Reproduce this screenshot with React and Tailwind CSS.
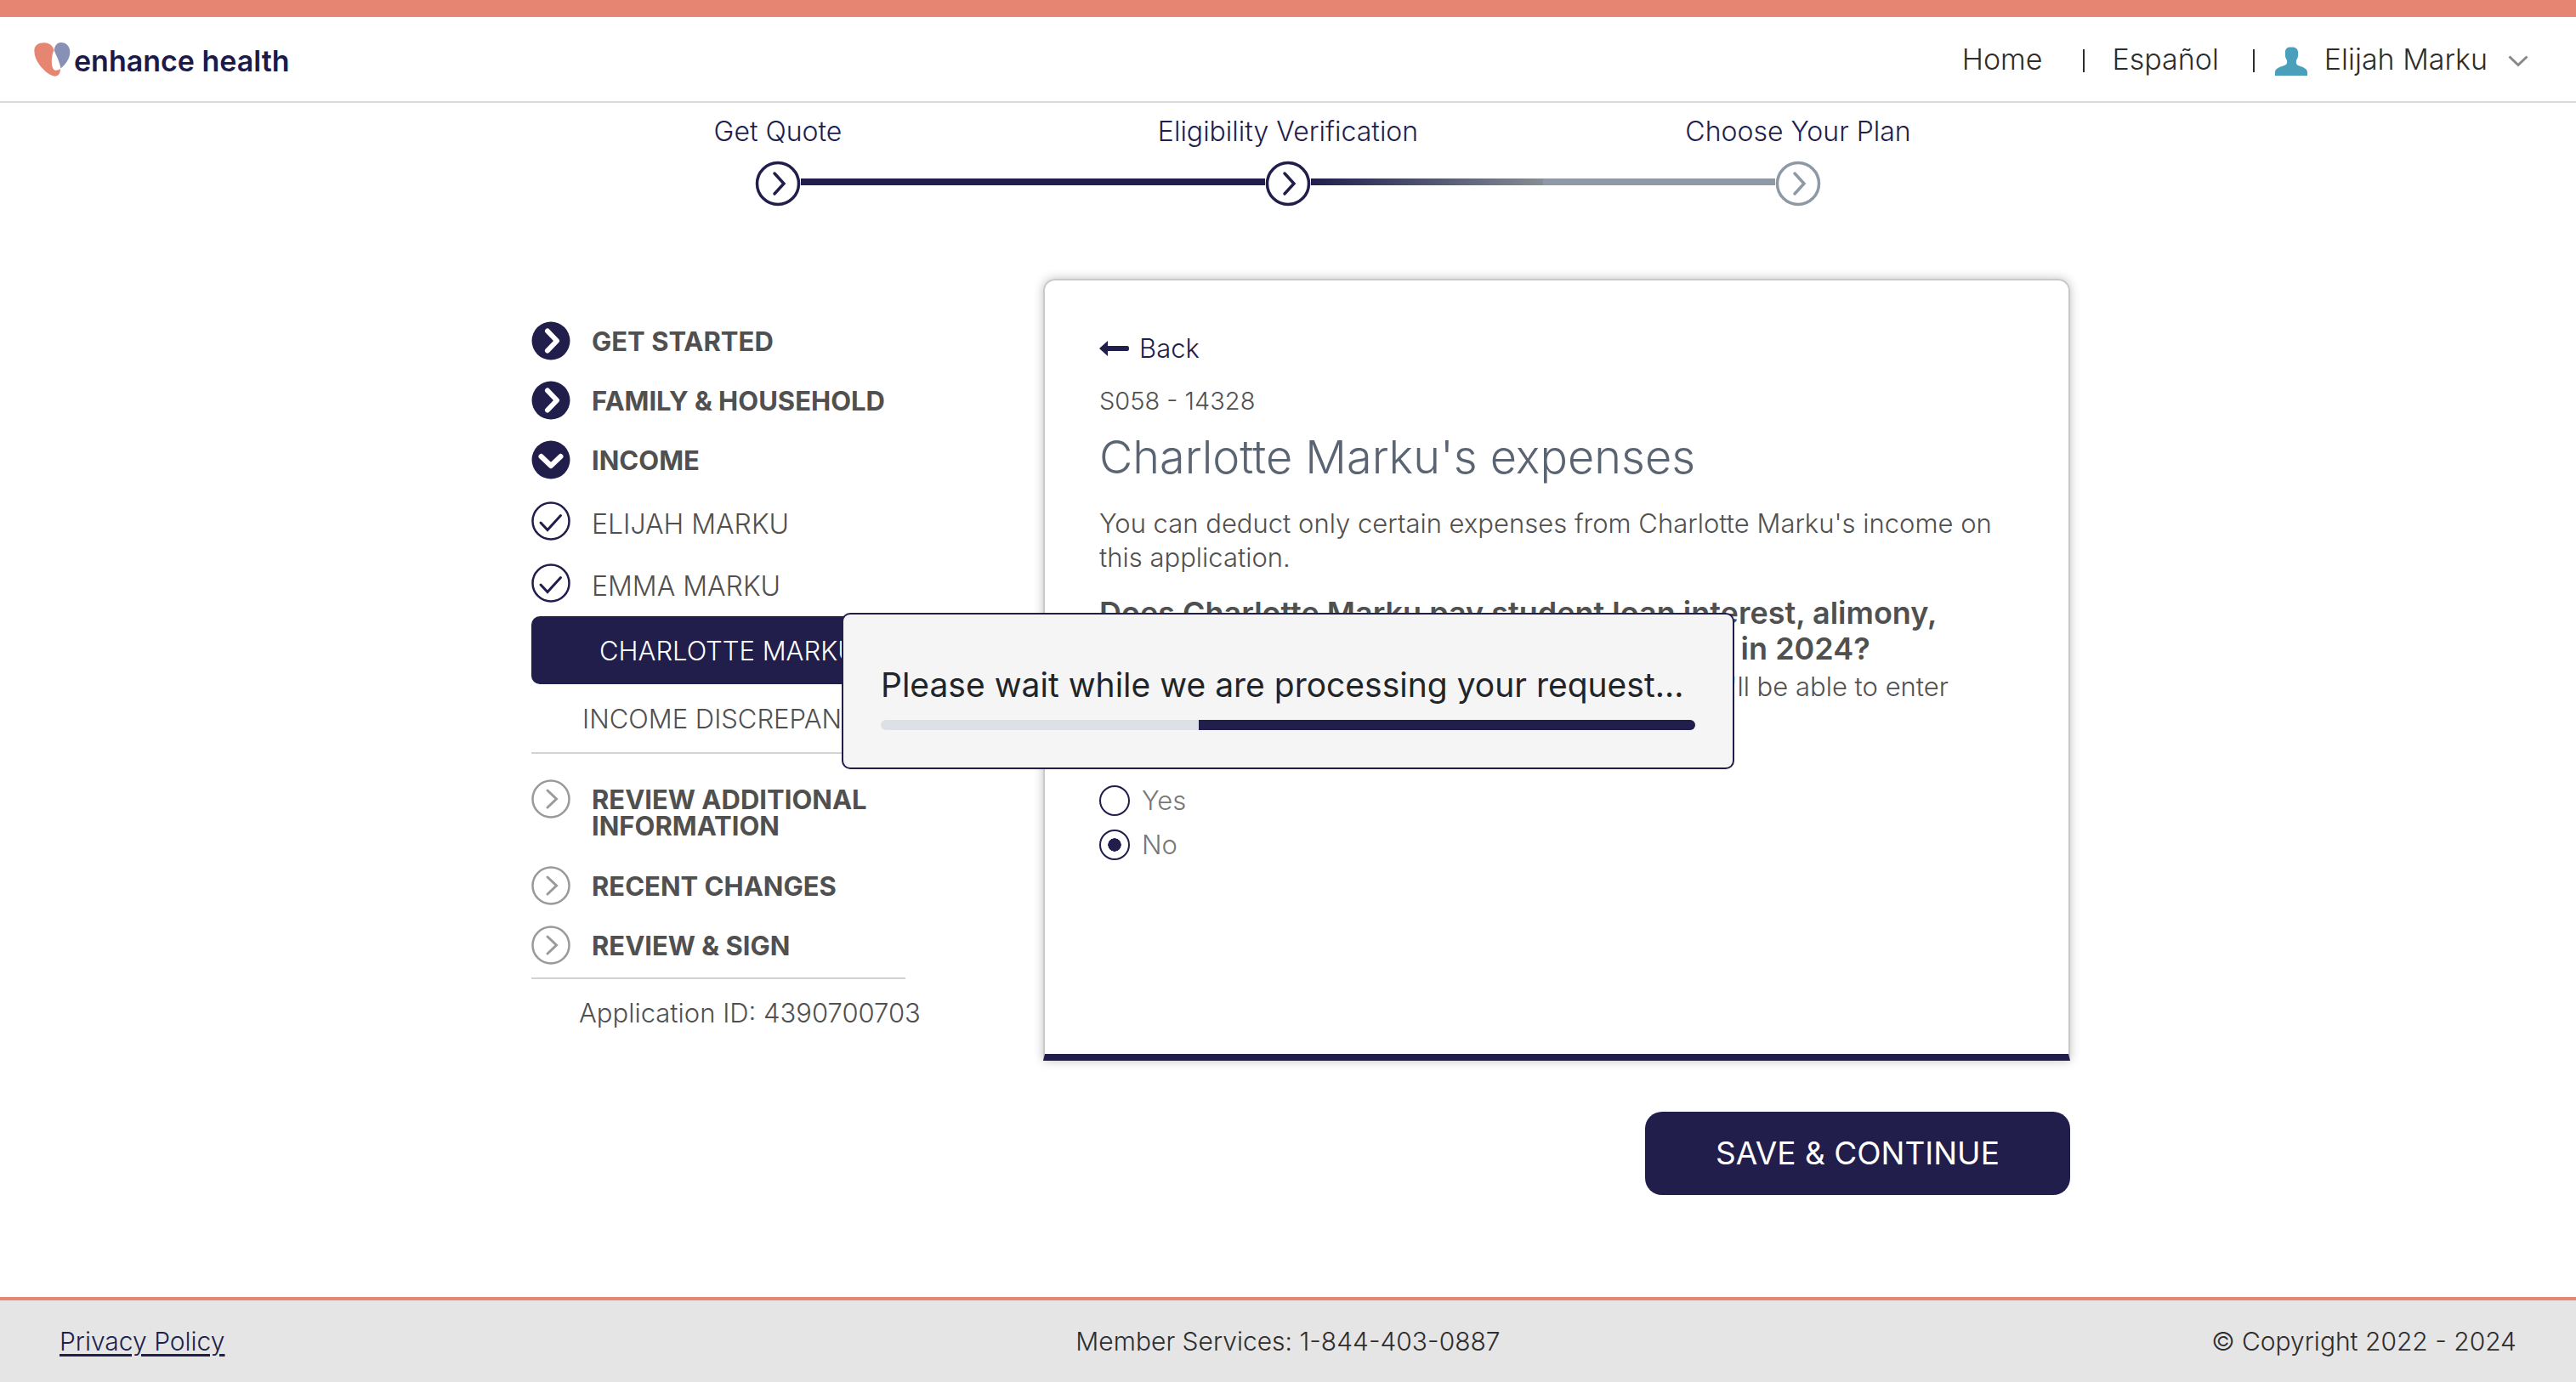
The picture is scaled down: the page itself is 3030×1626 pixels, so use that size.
import React, { useState } from "react";

function Logo() {
  return (
    <a href="#home" className="flex items-center gap-1" aria-label="enhance health">
      <svg viewBox="0 0 128 121" className="h-10 w-[43px]" aria-hidden="true">
        <path
          fill="#e68672"
          d="M0 30C0 10 14 1 36 1C54 1 66 12 70 28C65 36 62 52 62 70C62 88 68 99 78 99C85 99 89 97 92 93C94 108 86 120 73 120C58 119 38 105 20 82C8 66 0 48 0 30Z"
        />
        <path fill="#8890b5" d="M71 28C73 12 80 0 95 0C114 0 127 14 127 34C127 57 112 77 94 92C90 66 78 48 71 28Z" />
      </svg>
      <span className="pt-1 text-[34px] leading-10 font-semibold text-[#1c1a4b]">enhance health</span>
    </a>
  );
}

function Header() {
  return (
    <header className="flex min-h-[121px] items-center justify-between border-t-[20px] border-b-2 border-t-[#e68672] border-b-[#d9d9d9] pr-14 pl-10">
      <Logo />
      <nav className="flex items-center text-[34px] leading-10 text-[#2d2d2d]">
        <a href="#home">Home</a>
        <span className="mt-1 ml-12 h-[27px] w-[2px] bg-[#2d2d2d]" />
        <a href="#es" className="ml-8">Español</a>
        <span className="mt-1 ml-10 h-[27px] w-[2px] bg-[#2d2d2d]" />
        <button type="button" className="ml-6 flex items-center">
          <svg viewBox="0 0 38 34" className="mt-1 h-[34px] w-[38px]" aria-hidden="true">
            <path
              fill="#4aa0ba"
              d="M12 6C12 2 15 0 19 0.500C23 0 27 2 27 6C27.500 10 27 13 25 16C24.500 19 25 21 27 22C31 23.500 38 25 38 30V34H0V30C0 25 7 23.500 11 22C14 21 14.500 19 14 16C12 13 11.500 10 12 6Z"
            />
          </svg>
          <span className="ml-5">Elijah Marku</span>
          <svg viewBox="0 0 24 14" className="mt-1 ml-6 h-[14px] w-6" fill="none" stroke="#888" strokeWidth="3" aria-hidden="true">
            <path d="M1.500 1.500L12 11.500L22.500 1.500" />
          </svg>
        </button>
      </nav>
    </header>
  );
}

const steps = [
  { label: "Get Quote", left: "bg-transparent", right: "bg-[#211e4c]", color: "text-[#211e4c]" },
  {
    label: "Eligibility Verification",
    left: "bg-[#211e4c]",
    right: "bg-linear-to-r from-[#211e4c] to-[#868d93]",
    color: "text-[#211e4c]",
  },
  { label: "Choose Your Plan", left: "bg-[#8f99a5]", right: "bg-transparent", color: "text-[#8f99a5]" },
];

function Stepper() {
  return (
    <ol className="mx-auto grid w-full max-w-[1800px] grid-cols-3 pt-[14px]">
      {steps.map((s) => (
        <li key={s.label} className="flex flex-col items-center gap-[14px] text-[#211e4c]">
          <span className="text-[32px] leading-10">{s.label}</span>
          <span className="flex w-full items-center">
            <span className={`mb-1 h-2 flex-1 ${s.left}`} />
            <svg viewBox="0 0 54 54" className={`size-[54px] ${s.color}`} fill="none" stroke="currentColor" aria-hidden="true">
              <circle cx="27" cy="27" r="24.500" strokeWidth="3.500" />
              <path d="M23 15L34 27L23 39" strokeWidth="3.500" strokeLinecap="round" />
            </svg>
            <span className={`mb-1 h-2 flex-1 ${s.right}`} />
          </span>
        </li>
      ))}
    </ol>
  );
}

function StatusIcon({ kind }) {
  if (kind === "check") {
    return (
      <svg viewBox="0 0 46 46" className="size-[46px] shrink-0" fill="none" stroke="#211e4c" aria-hidden="true">
        <circle cx="23" cy="23" r="21.500" strokeWidth="2.500" />
        <path d="M11 25L19 33.500L34.500 16.500" strokeWidth="3" strokeLinecap="round" />
      </svg>
    );
  }
  if (kind === "todo") {
    return (
      <svg viewBox="0 0 46 46" className="size-[46px] shrink-0" fill="none" stroke="#9a9a9a" aria-hidden="true">
        <circle cx="23" cy="23" r="21.500" strokeWidth="2.500" />
        <path d="M19 13L29.500 23L19 33" strokeWidth="3" strokeLinecap="round" />
      </svg>
    );
  }
  return (
    <svg viewBox="0 0 46 46" className="size-[46px] shrink-0" fill="none" stroke="#fff" strokeWidth="6" strokeLinecap="round" strokeLinejoin="round" aria-hidden="true">
      <circle cx="23" cy="23" r="22.500" fill="#211e4c" stroke="none" />
      {kind === "open" ? <path d="M11.500 19L23 30L34.500 19" /> : <path d="M19 11.500L30 23L19 34.500" />}
    </svg>
  );
}

function Section({ kind, children }) {
  return (
    <li>
      <a href="#section" className="flex min-h-[70px] items-center gap-[25px] font-bold">
        <StatusIcon kind={kind} />
        <span>{children}</span>
      </a>
    </li>
  );
}

function Member({ children }) {
  return (
    <li>
      <a href="#member" className="flex min-h-[73px] items-center gap-[25px] text-[32px] font-light">
        <StatusIcon kind="check" />
        <span className="pt-2">{children}</span>
      </a>
    </li>
  );
}

function Sidebar() {
  return (
    <aside className="mt-[38px] w-[440px] shrink-0 text-[31px] leading-[31px] whitespace-nowrap text-[#505050]">
      <ul>
        <Section kind="done">GET STARTED</Section>
        <Section kind="done">FAMILY &amp; HOUSEHOLD</Section>
        <Section kind="open">INCOME</Section>
        <Member>ELIJAH MARKU</Member>
        <Member>EMMA MARKU</Member>
        <li>
          <a href="#member" aria-current="page" className="mt-[3px] flex min-h-20 items-center rounded-[10px] bg-[#211e4c] pl-20 text-white">
            CHARLOTTE MARKU
          </a>
        </li>
        <li className="border-b-2 border-[#d3d3d3]">
          <a href="#discrepancy" className="flex min-h-20 items-center pl-[60px] font-light">
            INCOME DISCREPANCY
          </a>
        </li>
        <li>
          <a href="#section" className="flex min-h-[120px] items-start gap-[25px] pt-[30px] font-bold">
            <StatusIcon kind="todo" />
            <span className="pt-2 whitespace-normal">REVIEW ADDITIONAL INFORMATION</span>
          </a>
        </li>
        <Section kind="todo">RECENT CHANGES</Section>
        <Section kind="todo">REVIEW &amp; SIGN</Section>
      </ul>
      <p className="mt-[3px] border-t-2 border-[#d3d3d3] pt-6 pl-14 font-light">Application ID: 4390700703</p>
    </aside>
  );
}

function Radio({ label, value, selected, onChange }) {
  return (
    <label className="flex items-center gap-[14px] text-[#777]">
      <input
        type="radio"
        name="expenses"
        checked={selected === value}
        onChange={() => onChange(value)}
        className="size-9 appearance-none rounded-full border-2 border-[#211e4c] bg-clip-content p-2 checked:bg-[radial-gradient(circle_closest-side,#211e4c_94%,transparent)] checked:bg-origin-content"
      />
      {label}
    </label>
  );
}

function ExpensesCard() {
  const [answer, setAnswer] = useState("no");
  return (
    <section className="min-h-[920px] rounded-t-[14px] border-2 border-b-8 border-[#c9c9c9] border-b-[#211e4c] px-16 pt-[60px] text-[31px] leading-10 font-light text-[#505050] shadow-[0_0_12px_rgba(0,0,0,0.25)]">
      <a href="#back" className="flex items-center gap-3 text-[#211e4c]">
        <svg viewBox="0 0 35 18" className="h-[18px] w-[35px]" fill="#211e4c" aria-hidden="true">
          <path d="M0 9L10 0V6H33Q35 6 35 9Q35 12 33 12H10V18Z" />
        </svg>
        Back
      </a>
      <p className="mt-[22px] text-[29px]">S058 - 14328</p>
      <h1 className="mt-4 text-[54px] leading-[60px] text-[#5a6472]">Charlotte Marku's expenses</h1>
      <p className="mt-7">You can deduct only certain expenses from Charlotte Marku's income on this application.</p>
      <fieldset>
        <legend className="pt-6 text-4xl leading-[42px] font-semibold">
          Does Charlotte Marku pay student loan interest, alimony,
          <br />
          or other expenses that should be deducted in 2024?
        </legend>
        <p className="mt-1">
          If Charlotte Marku lists more than one expense, you'll be able to enter them in the next step.
        </p>
        <div className="mt-[54px] flex flex-col gap-3">
          <Radio label="Yes" value="yes" selected={answer} onChange={setAnswer} />
          <Radio label="No" value="no" selected={answer} onChange={setAnswer} />
        </div>
      </fieldset>
    </section>
  );
}

function Footer() {
  return (
    <footer className="mt-auto grid min-h-[100px] grid-cols-3 items-center border-t-4 border-[#e68672] bg-[#e5e5e5] px-[70px] text-[30px] leading-10 text-[#2d2d2d]">
      <a href="#privacy" className="justify-self-start text-[#211e4c] underline underline-offset-4">Privacy Policy</a>
      <span className="justify-self-center">Member Services: 1-844-403-0887</span>
      <span className="justify-self-end">© Copyright 2022 - 2024</span>
    </footer>
  );
}

function ProcessingDialog() {
  return (
    <div className="fixed inset-0 flex items-center justify-center">
      <div role="dialog" aria-label="Processing" className="w-[1050px] max-w-full rounded-[10px] border-2 border-[#211e4c] bg-[#f5f5f5] px-11 pt-[58px] pb-11">
        <p className="text-[39px] leading-[50px] font-normal whitespace-nowrap text-[#212529]">Please wait while we are processing your request...</p>
        <div role="progressbar" aria-label="Processing request" className="mt-4 flex h-3 justify-end overflow-hidden rounded-md bg-[#dde1e6]">
          <div className="w-[61%] bg-[#211e4c]" />
        </div>
      </div>
    </div>
  );
}

export default function App() {
  return (
    <div className="flex min-h-screen flex-col bg-white font-['Inter','Liberation_Sans',sans-serif] font-light">
      <Header />
      <Stepper />
      <main className="mx-auto mt-[85px] flex w-full max-w-[1840px] items-start justify-between pb-16 pl-[30px]">
        <Sidebar />
        <div className="flex w-[1208px] flex-col">
          <ExpensesCard />
          <button type="submit" className="mt-[60px] w-[500px] self-end rounded-[20px] bg-[#211e4c] py-6 text-[37px] leading-[50px] font-normal text-white">
            SAVE &amp; CONTINUE
          </button>
        </div>
      </main>
      <Footer />
      <ProcessingDialog />
    </div>
  );
}
